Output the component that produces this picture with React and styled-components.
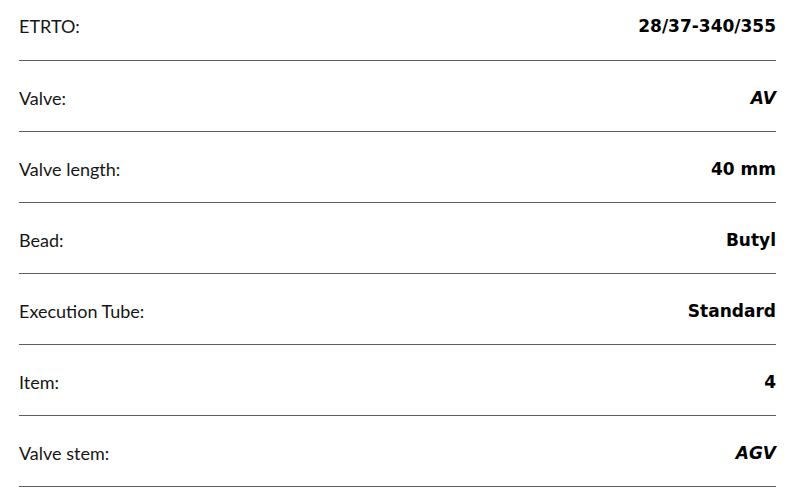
import styled, { createGlobalStyle } from 'styled-components';

const GlobalStyle = createGlobalStyle`
  html, body {
    margin: 0;
    padding: 0;
    background: #fff;
  }
  body {
    font-family: Lato, "Liberation Sans", sans-serif;
    color: #111;
  }
`;

const specs = [
  { label: 'ETRTO:', value: '28/37-340/355' },
  { label: 'Valve:', value: 'AV', slanted: true },
  { label: 'Valve length:', value: '40 mm' },
  { label: 'Bead:', value: 'Butyl' },
  { label: 'Execution Tube:', value: 'Standard' },
  { label: 'Item:', value: '4' },
  { label: 'Valve stem:', value: 'AGV', slanted: true },
];

const App = () => {
  return (
    <>
      <GlobalStyle />
      <SpecTable>
        {specs.map((s) => (
          <Row key={s.label}>
            <Label>{s.label}</Label>
            <Value $slanted={s.slanted}>{s.value}</Value>
          </Row>
        ))}
      </SpecTable>
    </>
  );
};

const SpecTable = styled.dl`
  margin: 0;
  padding: 0 20px 0 19px;
`;

const Row = styled.div`
  display: flex;
  align-items: center;
  justify-content: space-between;
  box-sizing: border-box;
  height: 71px;
  padding-top: 4px;
  border-bottom: 1px solid #5b5e62;
  &:first-child {
    height: 61px;
    padding: 0 0 8px;
  }
`;

const Label = styled.dt`
  font-size: 18px;
  font-weight: 400;
  color: #161616;
`;

const Value = styled.dd`
  margin: 0;
  font-family: "DejaVu Sans", Lato, sans-serif;
  font-size: 17px;
  font-weight: 700;
  color: #000;
  font-style: ${(p) => (p.$slanted ? 'italic' : 'normal')};
`;

export default App;
